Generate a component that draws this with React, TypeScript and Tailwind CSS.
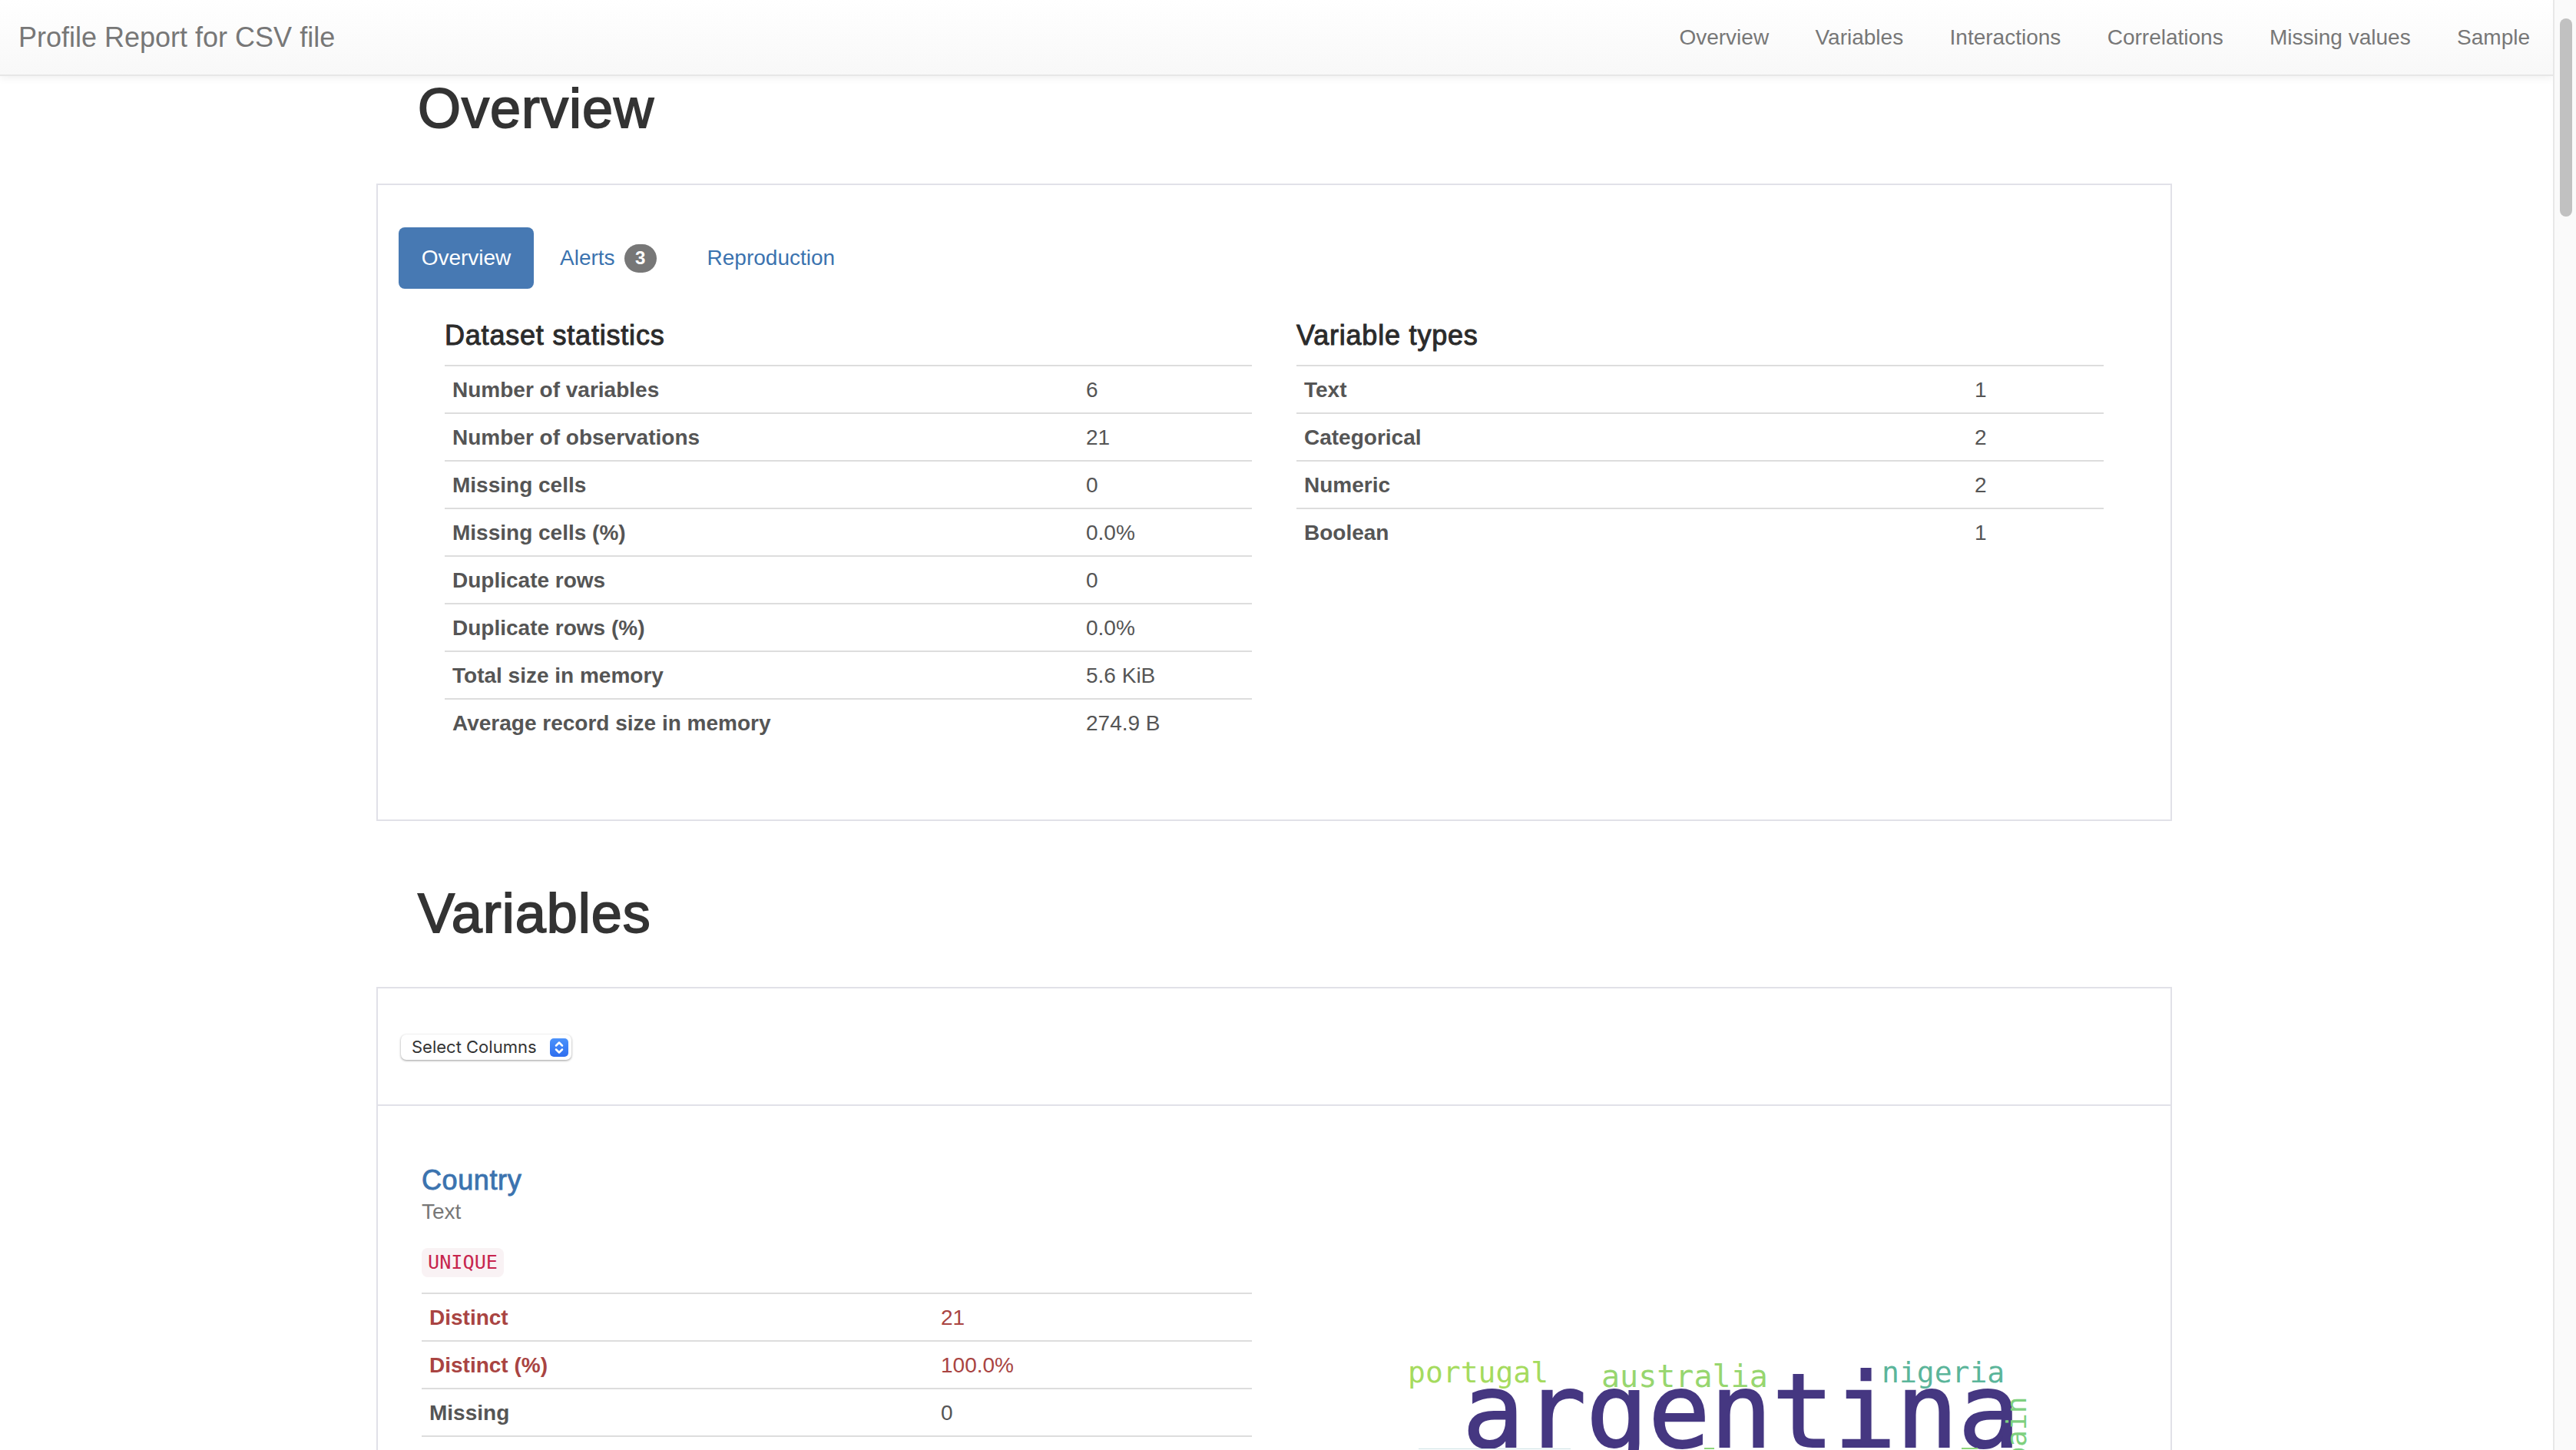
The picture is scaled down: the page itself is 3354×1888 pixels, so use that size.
const sans = "font-['Liberation_Sans',Arial,sans-serif]";
const link = 'text-[#3b73af]';

const navLinks = ['Overview', 'Variables', 'Interactions', 'Correlations', 'Missing values', 'Sample'];

const datasetStats = [
  ['Number of variables', '6'],
  ['Number of observations', '21'],
  ['Missing cells', '0'],
  ['Missing cells (%)', '0.0%'],
  ['Duplicate rows', '0'],
  ['Duplicate rows (%)', '0.0%'],
  ['Total size in memory', '5.6 KiB'],
  ['Average record size in memory', '274.9 B'],
];

const variableTypes = [
  ['Text', '1'],
  ['Categorical', '2'],
  ['Numeric', '2'],
  ['Boolean', '1'],
];

const countryStats = [
  { label: 'Distinct', value: '21', danger: true },
  { label: 'Distinct (%)', value: '100.0%', danger: true },
  { label: 'Missing', value: '0', danger: false },
  { label: 'Missing (%)', value: '0.0%', danger: false },
];

function Row({ label, value, valueWidth, danger }: { label: string; value: string; valueWidth: string; danger?: boolean }) {
  return (
    <div className={`flex h-[62px] items-center border-t-2 border-[#ddd] px-[10px] pt-[2px] text-[28px] leading-[40px] ${danger ? 'text-[#a94442]' : 'text-[#555]'}`}>
      <span className="flex-1 font-bold">{label}</span>
      <span className={valueWidth}>{value}</span>
    </div>
  );
}

function WordCloud() {
  return (
    <svg viewBox="0 0 860 300" className="h-[300px] w-[860px]" style={{ fontFamily: "'DejaVu Sans Mono', monospace" }}>
      <text x="33" y="41" fontSize="38" fill="#a5db5e">portugal</text>
      <text x="285" y="47" fontSize="40" fill="#97d66f">australia</text>
      <text x="650" y="41" fontSize="38" fill="#5bb59a">nigeria</text>
      <text x="104" y="125" fontSize="134" fill="#453781" stroke="#453781" strokeWidth="2">argentina</text>
      <text x="0" y="0" fontSize="36" fill="#7fd07f" transform="translate(838 168) rotate(-90)">spain</text>
      {/* tops of the next row of words, cut by the window edge */}
      <rect x="47" y="127" width="198" height="1" fill="#cfe3e5" />
      <rect x="419" y="126" width="13" height="2" fill="#8fd67a" />
      <rect x="754" y="126" width="21" height="2" fill="#8fd67a" />
    </svg>
  );
}

export default function App() {
  return (
    <div className={`flex h-[1888px] w-[3354px] overflow-hidden bg-white ${sans}`}>
      <div className="flex min-w-0 flex-1 flex-col">
        <nav className="flex h-[99px] shrink-0 items-center justify-between border-b-2 border-[#e7e7e7] bg-gradient-to-b from-white to-[#f8f8f8] pl-[24px] pr-[30px] shadow-[0_3px_10px_rgba(0,0,0,0.06)]">
          <span className="text-[36px] text-[#777]">Profile Report for CSV file</span>
          <div className="flex gap-[60.4px] text-[28px] text-[#777]">
            {navLinks.map(item => (
              <span key={item}>{item}</span>
            ))}
          </div>
        </nav>

        <main className="ml-[490px] w-[2338px]">
          {/* Overview */}
          <h1 className="pl-[54px] pt-[2px] text-[72px] font-medium leading-[80px] tracking-[1px] text-[#333] [-webkit-text-stroke:1.8px_#333]">Overview</h1>
          <section className="mt-[58px] h-[830px] border-2 border-[#e1e1e8] pl-[27px] pr-[28px] pt-[55px]">
            <div className={`flex items-center text-[28px] ${link}`}>
              <span className="flex h-[80px] w-[176px] items-center justify-center rounded-[8px] bg-[#4779b3] text-white">Overview</span>
              <span className="ml-[34px] flex items-center">
                Alerts
                <span className="ml-[12px] flex h-[37px] w-[42px] items-center justify-center rounded-full bg-[#777] text-[24px] font-bold text-white">3</span>
              </span>
              <span className="ml-[66px]">Reproduction</span>
            </div>
            <div className="mt-[41px] flex pl-[60px]">
              <div className="w-[1051px]">
                <h2 className="mb-[18px] text-[36px] font-medium leading-[40px] tracking-[0.8px] text-[#2b2b2b] [-webkit-text-stroke:1px_#2b2b2b]">Dataset statistics</h2>
                {datasetStats.map(([label, value]) => (
                  <Row key={label} label={label} value={value} valueWidth="w-[206px]" />
                ))}
              </div>
              <div className="ml-[58px] w-[1051px]">
                <h2 className="mb-[18px] text-[36px] font-medium leading-[40px] tracking-[0.8px] text-[#2b2b2b] [-webkit-text-stroke:1px_#2b2b2b]">Variable types</h2>
                {variableTypes.map(([label, value]) => (
                  <Row key={label} label={label} value={value} valueWidth="w-[158px]" />
                ))}
              </div>
            </div>
          </section>

          {/* Variables */}
          <h1 className="pl-[54px] pt-[80px] text-[72px] font-medium leading-[80px] tracking-[1px] text-[#333] [-webkit-text-stroke:1.8px_#333]">Variables</h1>
          <section className="mt-[56px] border-2 border-[#e1e1e8]">
            <div className="flex h-[153px] items-center border-b-2 border-[#e1e1e8] pl-[30px] pt-[2px]">
              <div className="flex h-[33px] w-[222px] items-center justify-between rounded-[7px] bg-white pl-[14px] pr-[4px] font-['Inter',sans-serif] text-[22px] text-[#333] shadow-[0_1px_3px_rgba(0,0,0,0.4)]">
                Select Columns
                <span className="flex h-[24px] w-[24px] items-center justify-center rounded-[5px] bg-gradient-to-b from-[#4c92fb] to-[#2f6eef]">
                  <svg viewBox="0 0 24 24" className="h-[24px] w-[24px]" fill="none" stroke="white" strokeWidth="2.5" strokeLinecap="round" strokeLinejoin="round">
                    <path d="M8 9.5l4-4 4 4M8 14.5l4 4 4-4" />
                  </svg>
                </span>
              </div>
            </div>
            <div className="flex pl-[57px] pt-[78px]">
              <div className="w-[1081px]">
                <a className={`mb-[2px] block text-[36px] font-medium leading-[38px] tracking-[0.6px] [-webkit-text-stroke:0.9px_#3b73af] ${link}`}>Country</a>
                <div className="text-[28px] leading-[40px] text-[#777]">Text</div>
                <code className="mt-[27px] inline-block rounded-[8px] bg-[#f9f2f4] px-[8px] font-['DejaVu_Sans_Mono',monospace] text-[25.2px] leading-[38px] text-[#c7254e]">UNIQUE</code>
                <div className="mt-[20px]">
                  {countryStats.map(s => (
                    <Row key={s.label} label={s.label} value={s.value} valueWidth="w-[395px]" danger={s.danger} />
                  ))}
                </div>
              </div>
              <div className="ml-[170px] pt-[241px]">
                <WordCloud />
              </div>
            </div>
          </section>
        </main>
      </div>

      {/* browser scrollbar */}
      <div className="w-[30px] shrink-0 border-l-2 border-[#e8e8e8] bg-[#fafafa] pl-[7px] pt-[24px]">
        <div className="h-[258px] w-[16px] rounded-full bg-[#c1c1c1]" />
      </div>
    </div>
  );
}
